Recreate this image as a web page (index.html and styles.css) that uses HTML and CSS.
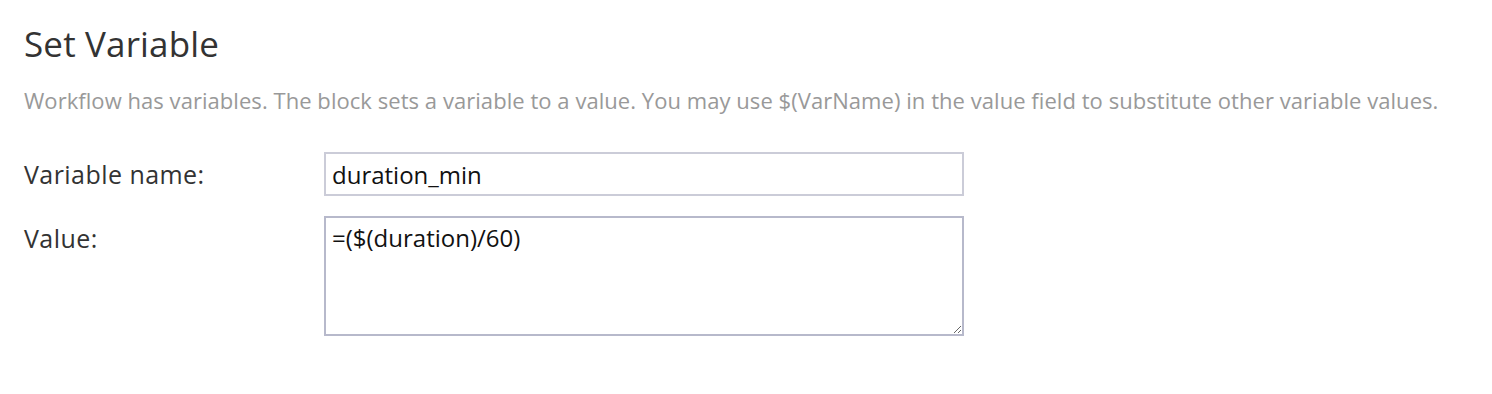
FILE: index.html
```html
<!DOCTYPE html>
<html lang="en">
<head>
    <meta charset="UTF-8">
    <title>Set Variable</title>
    <link rel="stylesheet" href="styles.css">
</head>
<body>
    <div class="block">
        <h2 class="block-title">Set Variable</h2>
        <p class="block-desc">Workflow has variables. The block sets a variable to a value. You may use $(VarName) in the value field to substitute other variable values.</p>
        <div class="field">
            <label class="field-label" for="var-name">Variable name:</label>
            <input class="field-input" id="var-name" type="text" value="duration_min">
        </div>
        <div class="field">
            <label class="field-label" for="var-value">Value:</label>
            <textarea class="field-input field-area" id="var-value">=($(duration)/60)</textarea>
        </div>
    </div>
</body>
</html>
```

FILE: styles.css
```css
body {
    margin: 0;
    background: #fff;
    font-family: "Open Sans", sans-serif;
    color: #333;
}
.block {
    padding: 20px 24px;
}
.block-title {
    margin: 0;
    font-size: 35px;
    font-weight: 400;
    line-height: 48px;
    letter-spacing: 0.15px;
    color: #333;
}
.block-desc {
    margin: 17px 0 0;
    font-size: 22px;
    line-height: 30px;
    letter-spacing: 0.05px;
    color: #999;
}
.field {
    display: flex;
    align-items: flex-start;
    margin-top: 37px;
}
.field + .field {
    margin-top: 20px;
}
.field-label {
    width: 300px;
    font-size: 25px;
    line-height: 44px;
    letter-spacing: 0.45px;
    color: #333;
}
.field-input {
    box-sizing: border-box;
    width: 640px;
    height: 44px;
    margin: 0;
    padding: 0 6px;
    border: 2px solid #cbccd8;
    border-radius: 0;
    font-family: "Open Sans", sans-serif;
    font-size: 24px;
    color: #111;
    background: #fff;
    outline: none;
}
.field-area {
    height: 120px;
    padding: 3px 6px;
    border-color: #b7b9cb;
    resize: both;
}
```
